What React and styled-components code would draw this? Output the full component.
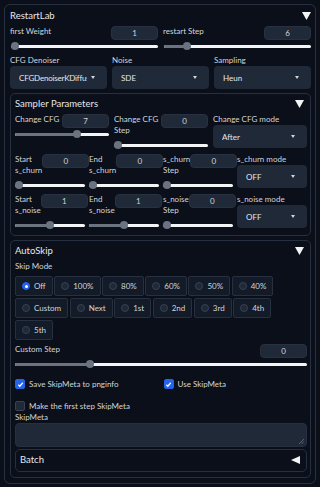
import React from 'react';
import styled, { createGlobalStyle } from 'styled-components';

const Global = createGlobalStyle`
  html, body { margin: 0; padding: 0; background: #0b0f19; }
  body { font-family: Lato, "Noto Sans", sans-serif; color: #e5e7eb; }
  * { box-sizing: border-box; }
`;

const Page = styled.div`
  padding: 4px;
`;

const Panel = styled.section`
  border: 1px solid #273041;
  border-radius: ${p => (p.$inner ? '5px' : '6px')};
  padding: ${p => (p.$inner ? '4px 3px 5px 4px' : '5px 4px 5px 5px')};
  display: flex;
  flex-direction: column;
  gap: 4px;
`;

const PanelHead = styled.div`
  display: flex;
  align-items: center;
  justify-content: space-between;
  height: 12px;
  padding-right: ${p => (p.$inner ? '3px' : '0')};
`;

const Title = styled.span`
  font-size: 9.5px;
  line-height: 12px;
  color: #e5e7eb;
`;

const Tri = ({ dir = 'down' }) => (
  <svg width="9" height="8" viewBox="0 0 9 8">
    {dir === 'down' ? (
      <polygon points="0,0 9,0 4.5,8" fill="#f3f4f6" />
    ) : (
      <polygon points="9,0 9,8 0,4" fill="#f3f4f6" />
    )}
  </svg>
);

const Grid = styled.div`
  display: grid;
  grid-template-columns: repeat(${p => p.$cols}, minmax(0, 1fr));
  column-gap: ${p => p.$gap || 5}px;
  align-items: start;
  margin-top: ${p => p.$mt || 0}px;
`;

const Stack = styled.div`
  display: flex;
  flex-direction: column;
  gap: ${p => p.$gap || 0}px;
  margin-top: ${p => p.$mt || 0}px;
`;

const Field = styled.div`
  display: flex;
  flex-direction: column;
  min-width: 0;
`;

const FieldHead = styled.div`
  display: flex;
  align-items: flex-start;
`;

const Label = styled.span`
  font-size: 8px;
  line-height: 11px;
  color: #d1d5db;
  flex: 1 1 auto;
  margin-bottom: ${p => (p.$mb != null ? p.$mb : 4)}px;
`;

const NumBox = styled.div`
  flex: none;
  width: 47px;
  height: 14px;
  border-radius: 4px;
  background: #1f2937;
  border: 1px solid #273142;
  color: #d1d5db;
  font-size: 8px;
  display: flex;
  align-items: center;
  justify-content: center;
`;

const SliderWrap = styled.div`
  position: relative;
  height: 10px;
  margin-left: ${p => p.$ml || 0}px;
`;

const Track = styled.div`
  position: absolute;
  left: 0;
  right: 0;
  top: 3.5px;
  height: 3px;
  border-radius: 2px;
  background: #f3f4f6;
  overflow: hidden;
`;

const Fill = styled.div`
  height: 100%;
  background: #6b7280;
`;

const Thumb = styled.div`
  position: absolute;
  top: 1px;
  width: 8px;
  height: 8px;
  border-radius: 50%;
  background: #6b7280;
`;

const Slider = ({ pct, ml }) => (
  <SliderWrap $ml={ml}>
    <Track>
      <Fill style={{ width: `calc(${pct} * (100% - 8px) + 4px)` }} />
    </Track>
    <Thumb style={{ left: `calc(${pct} * (100% - 8px))` }} />
  </SliderWrap>
);

const SliderField = ({ label, value, pct, ml }) => (
  <Field>
    <FieldHead>
      <Label>{label}</Label>
      <NumBox>{value}</NumBox>
    </FieldHead>
    <Slider pct={pct} ml={ml} />
  </Field>
);

const Select = styled.div`
  height: 23px;
  border-radius: 4px;
  background: #1f2937;
  display: flex;
  align-items: center;
  padding: 0 12px 0 9px;
  font-size: 8px;
  color: #e5e7eb;
`;

const SelectText = styled.span`
  flex: 1;
  overflow: hidden;
  white-space: nowrap;
  letter-spacing: ${p => (p.$tight ? '-0.2px' : '0')};
`;

const Caret = styled.span`
  margin-left: 4px;
  width: 0;
  height: 0;
  border-left: 2.5px solid transparent;
  border-right: 2.5px solid transparent;
  border-top: 3px solid #d1d5db;
`;

const DropField = ({ label, value, tight }) => (
  <Field>
    <Label $mb={0}>{label}</Label>
    <Select>
      <SelectText $tight={tight}>{value}</SelectText>
      <Caret />
    </Select>
  </Field>
);

const RadioGroup = styled.div`
  display: flex;
  flex-wrap: wrap;
  gap: 2px 1.5px;
`;

const RadioItem = styled.div`
  height: 20px;
  display: flex;
  align-items: center;
  gap: 4px;
  padding: 0 6px;
  background: #141b28;
  border: 1px solid #263040;
  border-radius: 2px;
  font-size: 8px;
  color: #d1d5db;
`;

const Dot = styled.span`
  width: 8px;
  height: 8px;
  border-radius: 50%;
  flex: none;
  background: ${p => (p.$on ? '#2563eb' : '#1f2937')};
  border: 1px solid ${p => (p.$on ? '#2563eb' : '#374151')};
  display: flex;
  align-items: center;
  justify-content: center;
  &::after {
    content: '';
    width: 3px;
    height: 3px;
    border-radius: 50%;
    background: ${p => (p.$on ? '#fff' : 'transparent')};
  }
`;

const CheckRow = styled.div`
  display: flex;
  align-items: center;
  gap: 4px;
  height: 12px;
  font-size: 8px;
  color: #d1d5db;
`;

const Box = styled.span`
  width: 10px;
  height: 10px;
  border-radius: 2px;
  flex: none;
  background: ${p => (p.$on ? '#2563eb' : '#1f2937')};
  border: 1px solid ${p => (p.$on ? '#2563eb' : '#374151')};
  display: flex;
  align-items: center;
  justify-content: center;
`;

const Check = () => (
  <svg width="7" height="7" viewBox="0 0 8 8">
    <path d="M1.5 4.3 L3.2 6 L6.6 2" stroke="#fff" strokeWidth="1.4" fill="none" />
  </svg>
);

const Checkbox = ({ on, label }) => (
  <CheckRow>
    <Box $on={on}>{on && <Check />}</Box>
    <span>{label}</span>
  </CheckRow>
);

const TextArea = styled.div`
  position: relative;
  height: 24px;
  border-radius: 4px;
  background: #1f2937;
  border: 1px solid #263040;
`;

const Grip = styled.svg`
  position: absolute;
  right: 2px;
  bottom: 2px;
`;

const radios1 = ['Off', '100%', '80%', '60%', '50%', '40%', 'Custom', 'Next', '1st', '2nd', '3rd', '4th', '5th'];

export default function App() {
  return (
    <>
      <Global />
      <Page>
        <Panel>
          <PanelHead>
            <Title>RestartLab</Title>
            <Tri />
          </PanelHead>
          <Grid $cols={2}>
            <SliderField label="first Weight" value="1" pct={0} ml={1} />
            <SliderField label="restart Step" value="6" pct={0.137} ml={1} />
          </Grid>
          <Grid $cols={3}>
            <DropField label="CFG Denoiser" value="CFGDenoiserKDiffusion" tight />
            <DropField label="Noise" value="SDE" />
            <DropField label="Sampling" value="Heun" />
          </Grid>
          <Panel $inner>
            <PanelHead $inner>
              <Title>Sampler Parameters</Title>
              <Tri />
            </PanelHead>
            <Grid $cols={3}>
              <SliderField label="Change CFG" value="7" pct={0.674} />
              <SliderField label="Change CFG Step" value="0" pct={0} />
              <DropField label="Change CFG mode" value="After" />
            </Grid>
            <Grid $cols={4} $gap={4}>
              <SliderField label="Start s_churn" value="0" pct={0} />
              <SliderField label="End s_churn" value="0" pct={0} />
              <SliderField label="s_churn Step" value="0" pct={0} />
              <DropField label="s_churn mode" value="OFF" />
            </Grid>
            <Grid $cols={4} $gap={4}>
              <SliderField label="Start s_noise" value="1" pct={0.5} />
              <SliderField label="End s_noise" value="1" pct={0.5} />
              <SliderField label="s_noise Step" value="0" pct={0} />
              <DropField label="s_noise mode" value="OFF" />
            </Grid>
          </Panel>
          <Panel $inner>
            <PanelHead $inner>
              <Title>AutoSkip</Title>
              <Tri />
            </PanelHead>
            <Field>
              <Label>Skip Mode</Label>
              <RadioGroup>
                {radios1.map((r, i) => (
                  <RadioItem key={r}>
                    <Dot $on={i === 0} />
                    <span>{r}</span>
                  </RadioItem>
                ))}
              </RadioGroup>
            </Field>
            <SliderField label="Custom Step" value="0" pct={0.25} />
            <Grid $cols={2} $mt={5}>
              <Checkbox on label="Save SkipMeta to pnginfo" />
              <Checkbox on label="Use SkipMeta" />
            </Grid>
            <Stack $mt={6}>
              <Checkbox label="Make the first step SkipMeta" />
              <Field>
                <Label $mb={0}>SkipMeta</Label>
                <TextArea>
                  <Grip width="5" height="5" viewBox="0 0 5 5">
                    <path d="M5 0 L0 5 M5 2.5 L2.5 5" stroke="#6b7280" strokeWidth="0.8" />
                  </Grip>
                </TextArea>
              </Field>
            </Stack>
            <Stack $mt={-2}>
              <Panel $inner>
                <PanelHead $inner>
                  <Title>Batch</Title>
                  <Tri dir="left" />
                </PanelHead>
              </Panel>
            </Stack>
          </Panel>
        </Panel>
      </Page>
    </>
  );
}
